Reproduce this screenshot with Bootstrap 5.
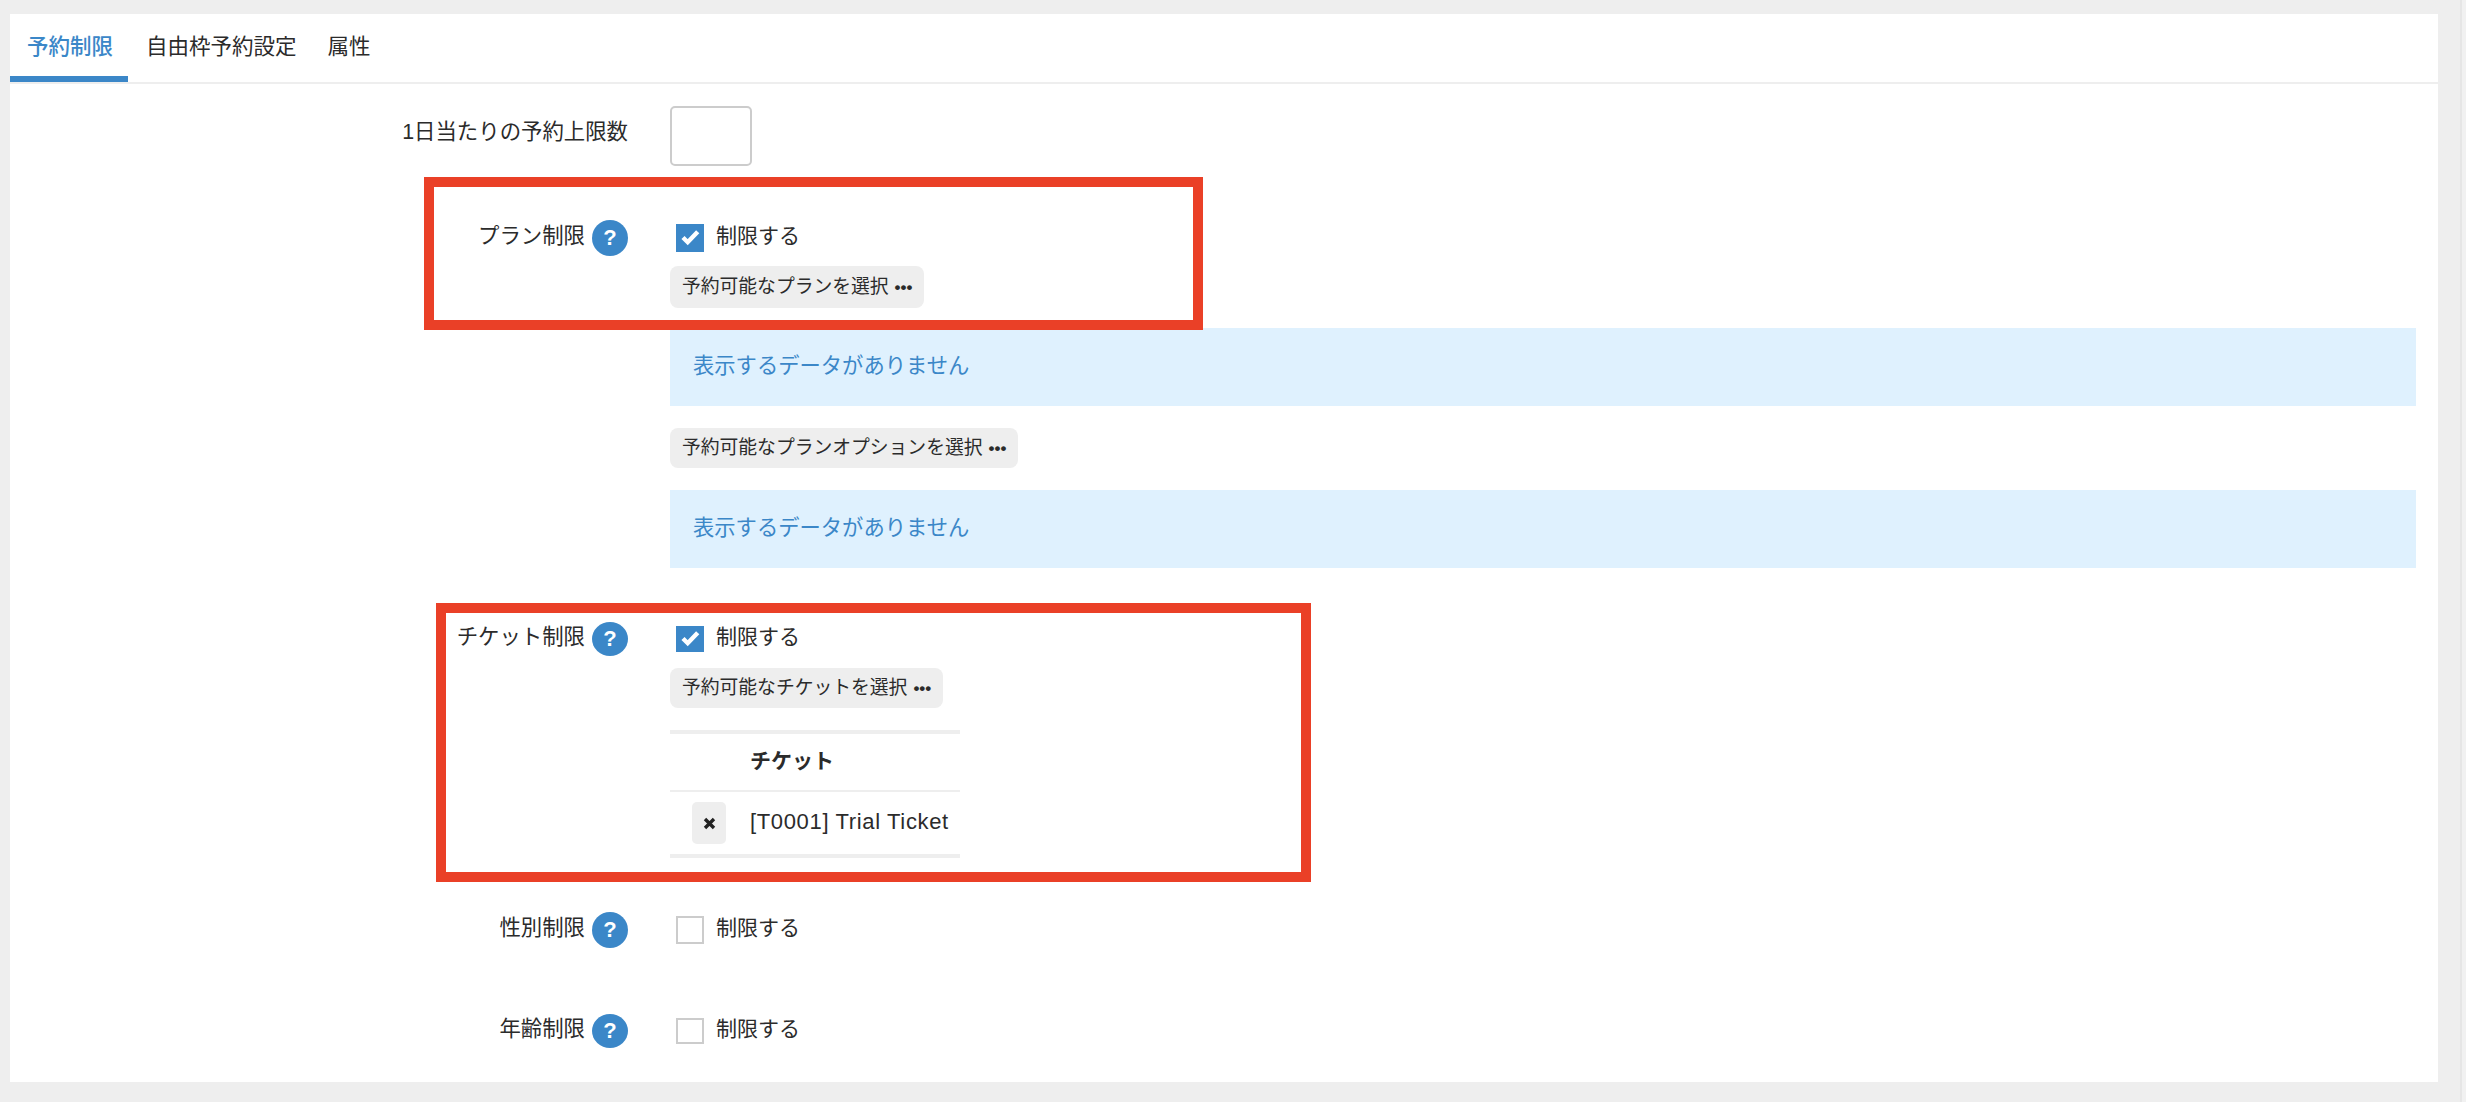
<!doctype html>
<html lang="ja">
<head>
<meta charset="utf-8">
<title>予約制限</title>
<link rel="stylesheet" href="https://cdn.jsdelivr.net/npm/bootstrap@5.3.0/dist/css/bootstrap.min.css">
<style>
html,body{height:100%}
body{background:#eee;color:#2b2b2b;font-family:"Liberation Sans","Noto Sans CJK JP",sans-serif;font-size:21.4px;overflow:hidden}
.page-wrap{height:1102px}
.page-main{flex:1 1 auto;min-width:0;padding:14px 22px 20px 10px}
.page-rail{width:6px;flex:none;border-left:2px solid #e6e6e6;background:#f1f1f1}
.sheet{background:#fff;height:1068px;position:relative}
.tab-strip{height:70px;border-bottom:2px solid #eee}
.tab-strip .nav-link{color:#2b2b2b;font-size:21.5px;height:68px;border:0;border-radius:0;line-height:34px}
.tab-strip .tab-wide{padding:16px 10px 0 18px}
.tab-strip .tab-end{padding:16px 10px 0 21px}
.tab-strip .nav-link.active{color:#3b87c8;border-bottom:6px solid #3b87c8;padding:16px 15px 0 17px;font-weight:500;width:118px;white-space:nowrap}
.form-body{padding:22px 22px 0 0}
.line-label{width:618px;flex:none;margin:0 42px 0 0;justify-content:flex-end;gap:7px}
.label-top{padding-top:10px}
.label-txt{margin-bottom:4px;line-height:30px}
.line-body{flex:1 1 auto;min-width:0}
.qty-box{width:82px;height:60px;border:2px solid #ccc;border-radius:5px;padding:0 8px;box-shadow:none}
.hint-dot{width:36px;height:36px;border-radius:50%;background:#3b87c8;color:#fff;font-weight:700;font-size:22px;line-height:35px;text-align:center;flex:none}
.lim-check{min-height:26px;padding:0;margin:0 0 0 6px;gap:12px;font-size:21px;height:36px}
.lim-check label{margin-bottom:4px;line-height:30px}
.lim-check .form-check-input{width:28px;height:28px;margin:0;border:2px solid #ccc;border-radius:0;float:none;flex:none}
.lim-check .form-check-input:checked{background-color:#3b87c8;border-color:#3b87c8;background-position:center;background-size:28px;background-image:url("data:image/svg+xml,%3Csvg xmlns='http://www.w3.org/2000/svg' viewBox='0 0 28 28'%3E%3Cpath d='M7 13.500l4.700 4.700 10-10.500' fill='none' stroke='%23fff' stroke-width='4.400'/%3E%3C/svg%3E")}
.squat .hint-dot{height:34px;line-height:33px}
.squat .lim-check{height:34px}
.squat .lim-check .form-check-input{height:26px}
.pick-btn{background:#eee;border:0;border-radius:8px;color:#2b2b2b;font-size:18.8px;height:40px;line-height:40px;padding:0 12px;display:block;width:max-content;margin-top:22px}
.pick-btn:hover{background:#e4e4e4;color:#2b2b2b}
.pick-first{margin-top:10px}
.pick-low{margin-top:12px}
.pick-tall{height:42px;margin-bottom:-2px}
.pick-dots{font-size:17px;font-weight:700;margin-left:6px}
.none-box{background:#dff1fe;color:#3b87c8;border:0;border-radius:0;height:78px;padding:0 23px;margin:22px 0 0;line-height:76px;font-size:21.3px}
.ticket-tbl{width:290px;margin:22px 0 0;border-collapse:separate;border-spacing:0;border-top:4px solid #eee;border-bottom:4px solid #eee;color:#2b2b2b;--bs-table-bg:transparent}
.ticket-tbl th{font-size:21px;height:58px;padding:0 0 3px;border-bottom:2px solid #eee;vertical-align:middle}
.ticket-tbl td{height:62px;padding:0 0 3px;border:0;vertical-align:middle;font-size:22px;letter-spacing:.65px;white-space:nowrap}
.ticket-tbl td.cell-x{width:80px;padding:0 0 0 22px}
.x-btn{width:34px;height:42px;padding:0;background:#eee;border:0;border-radius:5px;display:flex;align-items:center;justify-content:center}
.frame-mark{position:absolute;border:10px solid #ea4027;pointer-events:none}
.frame-a{left:414px;top:163px;width:779px;height:153px}
.frame-b{left:426px;top:589px;width:875px;height:279px}
.row-gap{margin-top:54px}
.row-gap-lg{margin-top:66px}
</style>
</head>
<body>
<div class="page-wrap d-flex">
  <div class="page-main">
    <div class="sheet">
      <ul class="nav tab-strip">
        <li class="nav-item"><a class="nav-link active" href="#">予約制限</a></li>
        <li class="nav-item"><a class="nav-link tab-wide" href="#">自由枠予約設定</a></li>
        <li class="nav-item"><a class="nav-link tab-end" href="#">属性</a></li>
      </ul>
      <form class="form-body">
        <div class="d-flex">
          <label class="line-label d-flex label-top" for="qty">1日当たりの予約上限数</label>
          <div class="line-body"><input id="qty" class="form-control qty-box" type="text"></div>
        </div>

        <div class="d-flex row-gap">
          <div class="line-label d-flex align-items-center"><span class="label-txt">プラン制限</span><span class="hint-dot">?</span></div>
          <div class="line-body">
            <div class="form-check lim-check d-flex align-items-center"><input class="form-check-input" type="checkbox" id="c1" checked><label for="c1">制限する</label></div>
          </div>
        </div>
        <div class="d-flex">
          <div class="line-label"></div>
          <div class="line-body">
            <button type="button" class="btn pick-btn pick-first pick-tall">予約可能なプランを選択<span class="pick-dots">•••</span></button>
            <div class="alert none-box">表示するデータがありません</div>
            <button type="button" class="btn pick-btn">予約可能なプランオプションを選択<span class="pick-dots">•••</span></button>
            <div class="alert none-box">表示するデータがありません</div>
          </div>
        </div>

        <div class="d-flex row-gap squat">
          <div class="line-label d-flex align-items-center"><span class="label-txt">チケット制限</span><span class="hint-dot">?</span></div>
          <div class="line-body">
            <div class="form-check lim-check d-flex align-items-center"><input class="form-check-input" type="checkbox" id="c2" checked><label for="c2">制限する</label></div>
          </div>
        </div>
        <div class="d-flex">
          <div class="line-label"></div>
          <div class="line-body">
            <button type="button" class="btn pick-btn pick-low">予約可能なチケットを選択<span class="pick-dots">•••</span></button>
            <table class="table ticket-tbl">
              <thead><tr><th></th><th>チケット</th></tr></thead>
              <tbody><tr>
                <td class="cell-x"><button type="button" class="x-btn" aria-label="削除"><svg width="13" height="13" viewBox="0 0 13 13"><path d="M2 2l9 9M11 2l-9 9" stroke="#222" stroke-width="3.400"/></svg></button></td>
                <td>[T0001] Trial Ticket</td>
              </tr></tbody>
            </table>
          </div>
        </div>

        <div class="d-flex row-gap">
          <div class="line-label d-flex align-items-center"><span class="label-txt">性別制限</span><span class="hint-dot">?</span></div>
          <div class="line-body">
            <div class="form-check lim-check d-flex align-items-center"><input class="form-check-input" type="checkbox" id="c3"><label for="c3">制限する</label></div>
          </div>
        </div>

        <div class="d-flex row-gap-lg squat">
          <div class="line-label d-flex align-items-center"><span class="label-txt">年齢制限</span><span class="hint-dot">?</span></div>
          <div class="line-body">
            <div class="form-check lim-check d-flex align-items-center"><input class="form-check-input" type="checkbox" id="c4"><label for="c4">制限する</label></div>
          </div>
        </div>
      </form>
      <div class="frame-mark frame-a"></div>
      <div class="frame-mark frame-b"></div>
    </div>
  </div>
  <div class="page-rail"></div>
</div>
<script src="https://cdn.jsdelivr.net/npm/bootstrap@5.3.0/dist/js/bootstrap.bundle.min.js"></script>
</body>
</html>
